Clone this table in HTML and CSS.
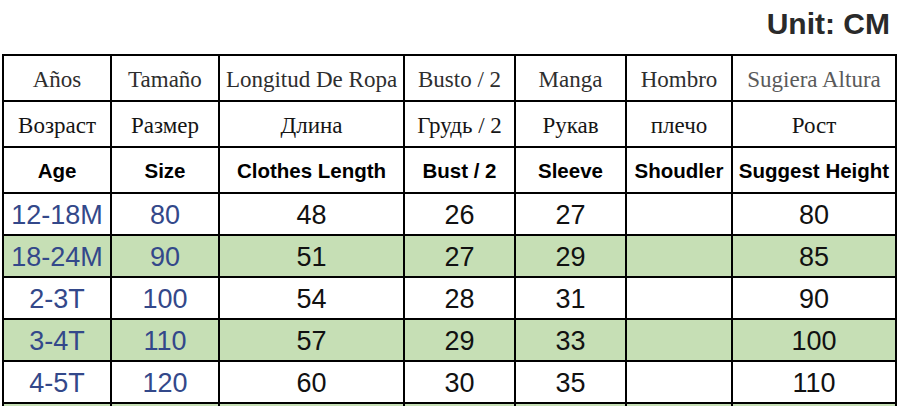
FILE: index.html
```html
<!DOCTYPE html>
<html>
<head>
<meta charset="utf-8">
<link rel="stylesheet" href="styles.css">
</head>
<body>
<div class="unit">Unit: CM</div>
<table class="chart">
  <colgroup>
    <col class="c1"><col class="c2"><col class="c3"><col class="c4"><col class="c5"><col class="c6"><col class="c7">
  </colgroup>
  <tr class="es">
    <td>Años</td><td>Tamaño</td><td>Longitud De Ropa</td><td>Busto / 2</td><td>Manga</td><td>Hombro</td><td class="light">Sugiera Altura</td>
  </tr>
  <tr class="ru">
    <td>Возраст</td><td>Размер</td><td>Длина</td><td>Грудь / 2</td><td>Рукав</td><td>плечо</td><td>Рост</td>
  </tr>
  <tr class="en">
    <td>Age</td><td>Size</td><td>Clothes Length</td><td>Bust / 2</td><td>Sleeve</td><td>Shoudler</td><td>Suggest Height</td>
  </tr>
  <tr class="row">
    <td class="blue">12-18M</td><td class="blue">80</td><td>48</td><td>26</td><td>27</td><td></td><td>80</td>
  </tr>
  <tr class="row green">
    <td class="blue">18-24M</td><td class="blue">90</td><td>51</td><td>27</td><td>29</td><td></td><td>85</td>
  </tr>
  <tr class="row">
    <td class="blue">2-3T</td><td class="blue">100</td><td>54</td><td>28</td><td>31</td><td></td><td>90</td>
  </tr>
  <tr class="row green">
    <td class="blue">3-4T</td><td class="blue">110</td><td>57</td><td>29</td><td>33</td><td></td><td>100</td>
  </tr>
  <tr class="row">
    <td class="blue">4-5T</td><td class="blue">120</td><td>60</td><td>30</td><td>35</td><td></td><td>110</td>
  </tr>
  <tr class="row green">
    <td></td><td></td><td></td><td></td><td></td><td></td><td></td>
  </tr>
</table>
</body>
</html>
```

FILE: styles.css
```css
html, body {
  margin: 0;
  padding: 0;
  background: #ffffff;
  overflow: hidden;
}

.unit {
  height: 54px;
  box-sizing: border-box;
  padding: 6px 10px 0 0;
  text-align: right;
  font-family: "Liberation Sans", Arial, sans-serif;
  font-weight: bold;
  font-size: 30px;
  line-height: 36px;
  color: #2a2a2a;
}

.chart {
  margin-left: 2px;
  border-collapse: collapse;
  table-layout: fixed;
  width: 795px;
}

.c1 { width: 108px; }
.c2 { width: 108px; }
.c3 { width: 185px; }
.c4 { width: 111px; }
.c5 { width: 111px; }
.c6 { width: 106px; }
.c7 { width: 164px; }

.chart td {
  border: 2px solid #000;
  padding: 0;
  text-align: center;
  vertical-align: middle;
  white-space: nowrap;
  overflow: hidden;
}

.es td, .ru td {
  height: 41px;
  font-family: "Liberation Serif", "Times New Roman", serif;
  font-size: 23px;
  line-height: 26px;
  padding-top: 3px;
}

.es td {
  color: #2e2e2e;
}

.es td.light {
  color: #5a5a5a;
}

.ru td {
  color: #151515;
}

.en td {
  height: 42px;
  font-family: "Liberation Sans", Arial, sans-serif;
  font-weight: bold;
  font-size: 20.5px;
  line-height: 24px;
  color: #000;
  padding-top: 2px;
}

.row td {
  height: 38px;
  font-family: "Liberation Sans", Arial, sans-serif;
  font-size: 27px;
  line-height: 30px;
  color: #111;
  padding-top: 2px;
}

.row td.blue {
  color: #33488a;
}

.row.green td {
  background: #c6dfb5;
}
```
